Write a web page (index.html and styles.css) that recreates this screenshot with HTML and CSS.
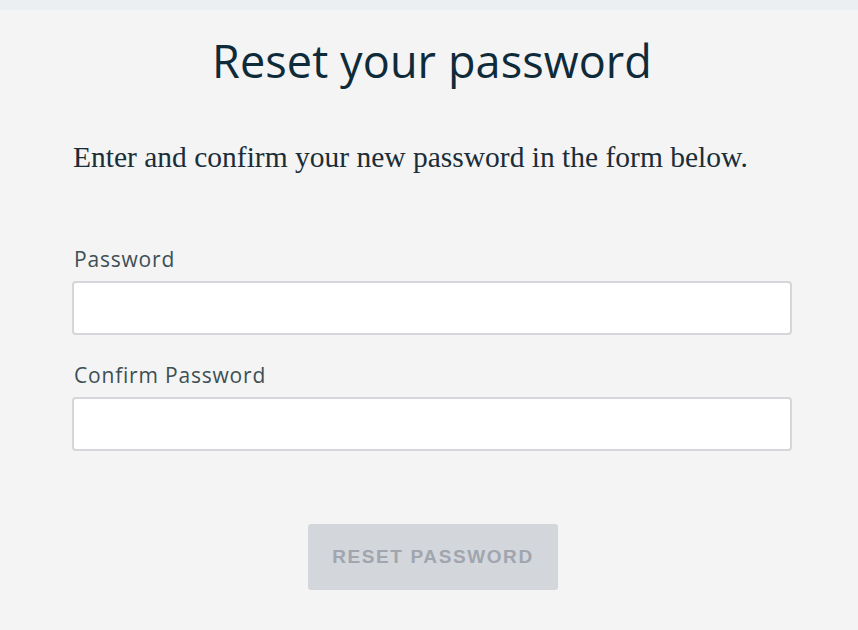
FILE: index.html
```html
<!DOCTYPE html>
<html>
<head>
<meta charset="utf-8">
<link rel="stylesheet" href="styles.css">
</head>
<body>
<div class="topbar"></div>
<main class="page">
  <h1 class="title">Reset your password</h1>
  <p class="intro">Enter and confirm your new password in the form below.</p>
  <form class="form">
    <label class="field">
      <span class="label">Password</span>
      <input class="input" type="password">
    </label>
    <label class="field">
      <span class="label">Confirm Password</span>
      <input class="input" type="password">
    </label>
    <div class="actions">
      <button class="btn" type="button" disabled>RESET PASSWORD</button>
    </div>
  </form>
</main>
</body>
</html>
```
FILE: styles.css
```css
html, body {
  margin: 0;
  padding: 0;
  background: #f4f4f4;
}
.topbar {
  height: 10px;
  background: #ebeff2;
}
.page {
  padding: 0 66px 0 72px;
}
.title {
  margin: 21px 0 0;
  text-align: center;
  font-family: "Open Sans", "Lato", sans-serif;
  font-weight: 400;
  font-size: 45px;
  line-height: 60px;
  letter-spacing: 0.1px;
  color: #0f2b3a;
}
.intro {
  margin: 49px 0 0 1px;
  font-family: "Liberation Serif", serif;
  font-size: 29.5px;
  line-height: 34px;
  color: #1b2e38;
}
.form {
  margin-top: 73px;
}
.field {
  display: flex;
  flex-direction: column;
  margin-bottom: 28px;
}
.label {
  font-family: "Open Sans", "Lato", sans-serif;
  font-weight: 500;
  font-size: 21px;
  line-height: 24px;
  letter-spacing: 0.8px;
  color: #3d4f55;
  margin-left: 2px;
  margin-bottom: 10px;
}
.input {
  box-sizing: border-box;
  height: 54px;
  width: 100%;
  border: 2px solid #d4d6da;
  border-radius: 4px;
  background: #fff;
  margin: 0;
}
.actions {
  display: flex;
  justify-content: center;
  margin-top: 73px;
}
.btn {
  width: 250px;
  height: 66px;
  border: none;
  border-radius: 3px;
  background: #d3d6db;
  color: #a0a5ae;
  font-family: "Liberation Sans", Arial, sans-serif;
  font-weight: 700;
  font-size: 19px;
  letter-spacing: 1.6px;
  margin-left: 2px;
}
```
